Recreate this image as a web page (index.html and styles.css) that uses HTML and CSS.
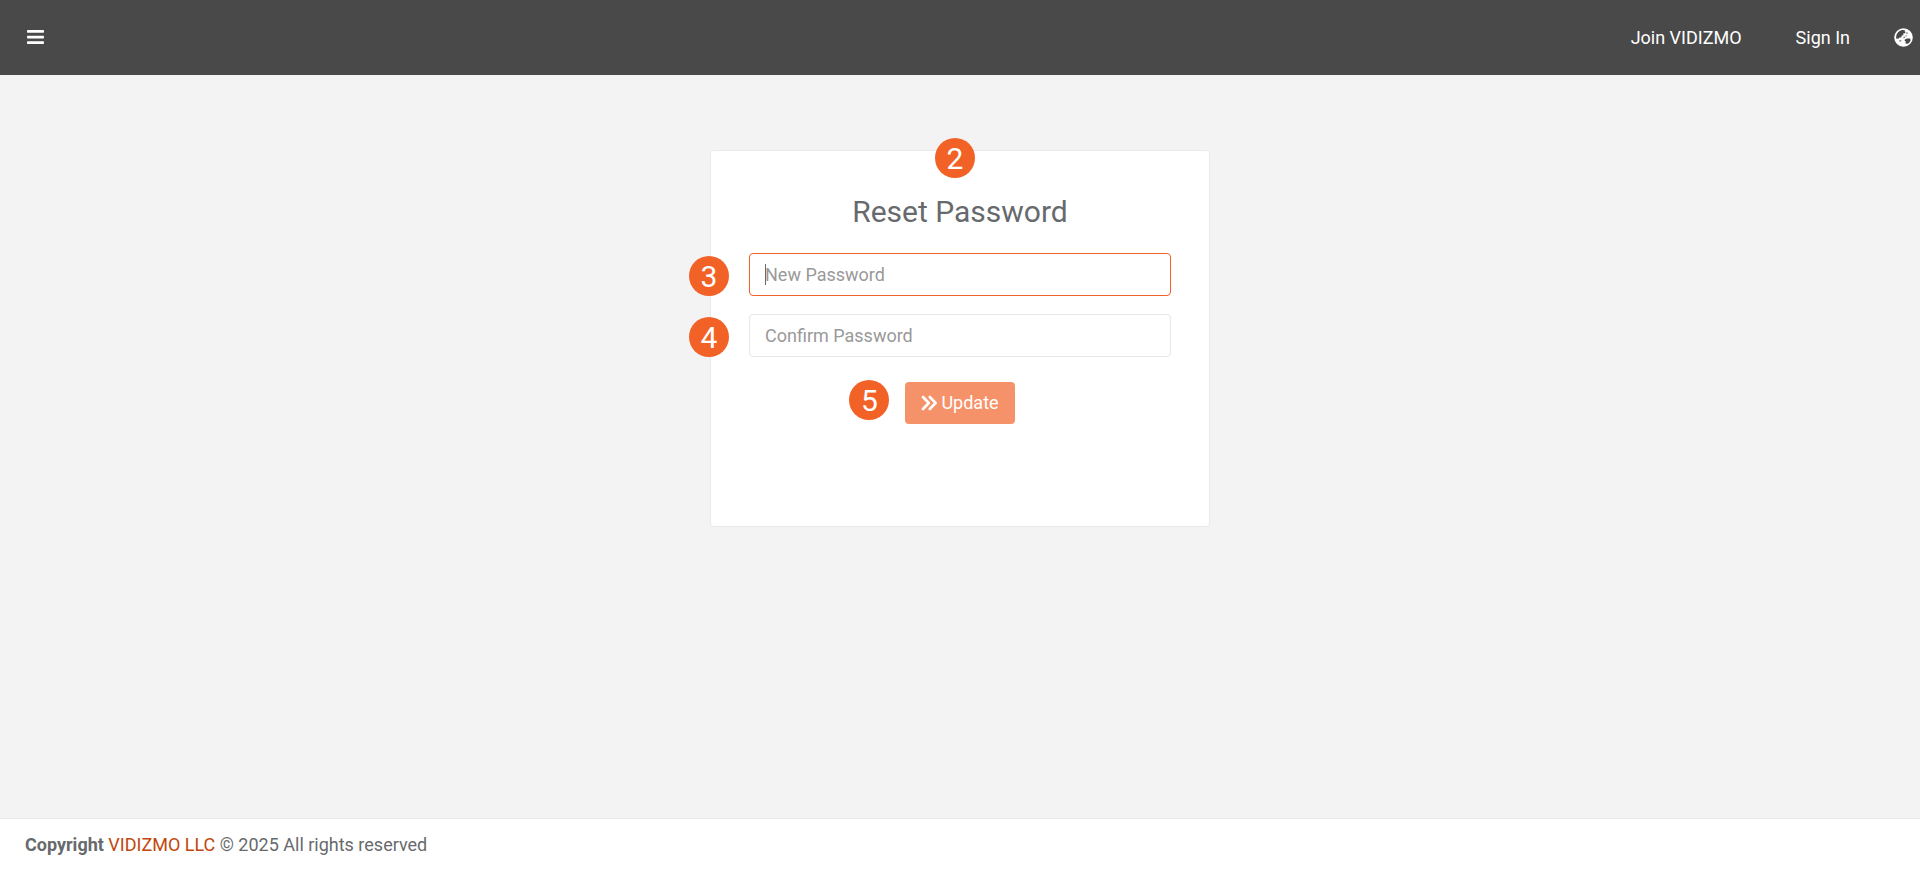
FILE: index.html
```html
<!DOCTYPE html>
<html lang="en">
<head>
    <meta charset="UTF-8">
    <meta name="viewport" content="width=device-width, initial-scale=1.0">
    <title>Reset Password</title>
    <link rel="stylesheet" href="styles.css">
</head>
<body>
    <header class="navbar">
        <button type="button" class="icon-btn menu-btn" aria-label="Menu">
            <svg width="17" height="15" viewBox="0 0 17 15" fill="#fff">
                <rect x="0" y="0" width="17" height="2.7" rx="0.8"/>
                <rect x="0" y="5.8" width="17" height="2.7" rx="0.8"/>
                <rect x="0" y="11.3" width="17" height="2.7" rx="0.8"/>
            </svg>
        </button>
        <nav class="nav-links">
            <a href="#">Join VIDIZMO</a>
            <a href="#">Sign In</a>
            <button type="button" class="icon-btn" aria-label="Language">
                <svg width="19" height="19" viewBox="0 0 19 19">
                    <circle cx="9.5" cy="9.5" r="9.3" fill="#fff"/>
                    <path fill="#494949" d="M2.2 8.8C2.4 5.4 5 2.6 8.4 2.1l2.6.1-.4 1.2 1 .6-.6 1.2-1.8.4.2 1.6-1.6.4-.6 2-1.8-.2-1 1.4-2.4-.4z"/>
                    <path fill="#494949" d="M10.8 11.6l2.2-1.2 3.2.2.4 1.8-1.6 2.6-2.2 1-1.4-1.2.4-1.2-1.2-.8zM12.2 4.8l1.2-.6.2 1.2-1 .6zM5.4 12.2l2 .2-.2 1.2-1.8-.4zM9.4 9l1.2-.4.2 1.2-1 .4zM11.6 7.4l1-.2v1l-1 .2z"/>
                </svg>
            </button>
        </nav>
    </header>

    <main class="content">
        <form class="card">
            <span class="badge badge-top">2</span>
            <h1>Reset Password</h1>
            <div class="form-group">
                <span class="badge badge-field">3</span>
                <input type="password" id="newPassword" class="active" placeholder="New Password" aria-label="New Password">
                <span class="caret"></span>
            </div>
            <div class="form-group">
                <span class="badge badge-field">4</span>
                <input type="password" id="confirmPassword" placeholder="Confirm Password" aria-label="Confirm Password">
            </div>
            <div class="form-action">
                <span class="badge badge-button">5</span>
                <button type="submit" class="btn-update" disabled>
                    <svg width="16" height="16" viewBox="0 0 16 16" fill="none" stroke="#fff" stroke-width="2.6" stroke-linecap="round" stroke-linejoin="round">
                        <path d="M2 2l5.8 6L2 14M8.8 2l5.8 6-5.8 6"/>
                    </svg>
                    Update
                </button>
            </div>
        </form>
    </main>

    <footer class="footer">
        <strong>Copyright</strong> <a href="#">VIDIZMO LLC</a> © 2025 All rights reserved
    </footer>
</body>
</html>
```

FILE: styles.css
```css
* {
    box-sizing: border-box;
}
body {
    display: flex;
    flex-direction: column;
    min-height: 100vh;
    margin: 0;
    background: #f3f3f4;
    color: #676a6c;
    font-family: Roboto, Arial, sans-serif;
    font-size: 18px;
    line-height: 26px;
}
a {
    text-decoration: none;
}
.navbar {
    display: flex;
    align-items: center;
    justify-content: space-between;
    height: 75px;
    padding: 0 7px 0 27px;
    background: #494949;
}
.nav-links {
    display: flex;
    align-items: center;
}
.nav-links a {
    color: #fff;
    margin-right: 54px;
}
.nav-links a + a {
    margin-right: 44px;
}
.icon-btn {
    display: flex;
    padding: 0;
    border: none;
    background: none;
    cursor: pointer;
}
.content {
    flex: 1;
    padding: 75px 20px;
}
.card {
    position: relative;
    max-width: 500px;
    min-height: 377px;
    margin: 0 auto;
    padding: 38px;
    background: #fff;
    border: 1px solid #e7eaec;
    border-radius: 4px;
}
h1 {
    margin: 4px 0 22px;
    font-size: 30px;
    font-weight: 400;
    line-height: 38px;
    text-align: center;
}
.form-group {
    position: relative;
    margin-bottom: 18px;
}
.form-group input {
    display: block;
    width: 100%;
    height: 43px;
    padding: 0 15px;
    background: #fff;
    border: 1px solid #e5e6e7;
    border-radius: 4px;
    color: #676a6c;
    font: inherit;
    outline: none;
}
.form-group input.active {
    border-color: #f26227;
}
.form-group input::placeholder {
    color: #999;
}
.caret {
    position: absolute;
    top: 11px;
    left: 16px;
    width: 1px;
    height: 21px;
    background: #676a6c;
}
.form-action {
    position: relative;
    width: fit-content;
    margin: 25px auto 0;
}
.btn-update {
    display: flex;
    align-items: center;
    gap: 4px;
    height: 42px;
    padding: 0 16px;
    background: #f6926a;
    border: none;
    border-radius: 4px;
    color: #fff;
    font: inherit;
}
.badge {
    position: absolute;
    width: 40px;
    height: 40px;
    background: #f26227;
    border-radius: 50%;
    color: #fff;
    font-size: 30px;
    line-height: 42px;
    text-align: center;
}
.badge-top {
    top: -13px;
    left: 224px;
}
.badge-field {
    top: 3px;
    left: -60px;
}
.badge-button {
    top: -2px;
    left: -56px;
}
.footer {
    height: 51px;
    padding: 13px 25px 11px;
    background: #fff;
    border-top: 1px solid #e7eaec;
}
.footer a {
    color: #c2470d;
}
```
